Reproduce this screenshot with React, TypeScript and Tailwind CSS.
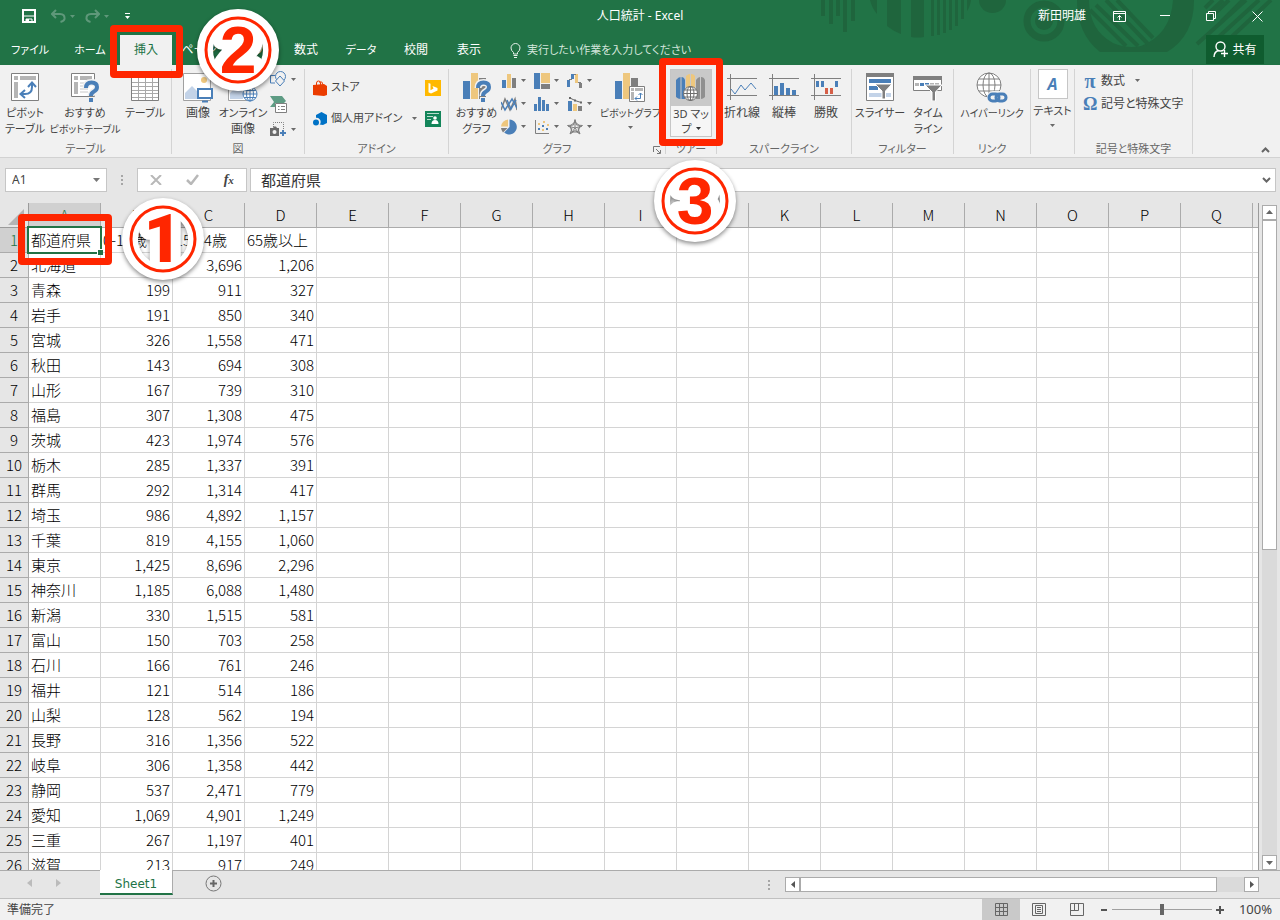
import { useState } from 'react'
import type { ReactNode } from 'react'

const columns = 'ABCDEFGHIJKLMNOPQ'.split('')

const rows: string[][] = [
  ['都道府県', '0-14歳', '15-64歳', '65歳以上'],
  ['北海道', '651', '3,696', '1,206'],
  ['青森', '199', '911', '327'],
  ['岩手', '191', '850', '340'],
  ['宮城', '326', '1,558', '471'],
  ['秋田', '143', '694', '308'],
  ['山形', '167', '739', '310'],
  ['福島', '307', '1,308', '475'],
  ['茨城', '423', '1,974', '576'],
  ['栃木', '285', '1,337', '391'],
  ['群馬', '292', '1,314', '417'],
  ['埼玉', '986', '4,892', '1,157'],
  ['千葉', '819', '4,155', '1,060'],
  ['東京', '1,425', '8,696', '2,296'],
  ['神奈川', '1,185', '6,088', '1,480'],
  ['新潟', '330', '1,515', '581'],
  ['富山', '150', '703', '258'],
  ['石川', '166', '761', '246'],
  ['福井', '121', '514', '186'],
  ['山梨', '128', '562', '194'],
  ['長野', '316', '1,356', '522'],
  ['岐阜', '306', '1,358', '442'],
  ['静岡', '537', '2,471', '779'],
  ['愛知', '1,069', '4,901', '1,249'],
  ['三重', '267', '1,197', '401'],
  ['滋賀', '213', '917', '249'],
]

const BLUE = '#4a7fb8'
const TAN = '#eec77e'
const GRAY = '#7f7f7f'
const PALE = '#c3d3e8'

function Svg({ w, h, children }: { w: number; h: number; children: ReactNode }) {
  return (
    <svg width={w} height={h} viewBox={`0 0 ${w} ${h}`} fill="none" className="shrink-0" aria-hidden="true">
      {children}
    </svg>
  )
}

function Caret({ color = '#6a6a6a' }: { color?: string }) {
  return <Svg w={5} h={3}><path d="M0 0h5L2.5 3z" fill={color} /></Svg>
}

/* ---------- title bar ---------- */

function TitlePattern() {
  return (
    <svg width="470" height="65" viewBox="0 0 470 65" fill="none" className="absolute top-0 right-0" aria-hidden="true">
      <g fill="#1f653d">
        <path d="M11 0h4v16h-4zM19 0h4v24h-4zM26 0h4v16h-4zM33 0h4v32h-4zM41 0h4v21h-4z" />
        <path d="M60 0h7v14q-5-6-7-14z" />
        <path d="M77 0h14v34q-8-3-14-8z" />
        <path d="M101 0h13v37q-7 1-13 0z" />
        <path d="M121 0h3v36h-3zM127 0h3v35h-3zM133 0h3v33h-3zM139 0h3v30h-3zM145 0h3v26h-3zM151 0h3v19h-3zM157 0h4q-1 7-4 11z" />
        <path d="M169 0h27a13.500 13 0 0 1-27 0z" />
        <circle cx="234" cy="21" r="9" />
        <path d="M267 0h12q0 30 24 43q14 6 28 3q30-12 32-46h21q0 36-27 52h-67q-23-18-23-52z" />
      </g>
      <circle cx="234" cy="21" r="17" stroke="#1f653d" strokeWidth="7" />
      <g stroke="#1f653d" strokeWidth="4">
        <path d="M280 10l36 36M286 5l42 41M296 0l42 44M307 0l36 38" />
        <path d="M395 8l8-8M399 13l14-13M398 20l21-20M411 22l22-22M387 44l49-44M401 44l48-44M414 44l47-44" />
      </g>
    </svg>
  )
}

function TitleBar() {
  return (
    <div className="relative grid h-8 grid-cols-[1fr_auto_1fr] items-center text-white">
      <div className="flex items-center pl-[22px]">
        <button aria-label="上書き保存">
          <Svg w={14} h={14}>
            <path d="M1 1h12v12H1z" stroke="#fff" strokeWidth="2" />
            <path d="M2 7h10M4 10h6v4H4z" stroke="#fff" strokeWidth="1" />
            <path d="M4 10h3v3H4z" fill="#fff" />
          </Svg>
        </button>
        <button aria-label="元に戻す" className="ml-[15px] flex items-center gap-1">
          <Svg w={15} h={14}><path d="M5 1L1 5l4 4M1.500 5H9q5 0 4.500 5-.5 2-4 3" stroke="#5f987a" strokeWidth="2" /></Svg>
          <Caret color="#5f987a" />
        </button>
        <button aria-label="やり直し" className="ml-2.5 flex items-center gap-1">
          <Svg w={15} h={14}><path d="M10 1l4 4-4 4M13.500 5H6Q1 5 1.500 10q.5 2 4 3" stroke="#5f987a" strokeWidth="2" /></Svg>
          <Caret color="#5f987a" />
        </button>
        <button aria-label="クイック アクセス ツール バー" className="ml-4">
          <Svg w={5} h={6}><path d="M0 0h5v1H0zM0 3h5L2.500 6z" fill="#fff" /></Svg>
        </button>
      </div>
      <h1 className="text-xs">人口統計 - Excel</h1>
      <div className="flex items-center justify-end">
        <span className="mr-2.5 text-xs">新田明雄</span>
        <button aria-label="リボンの表示オプション" className="flex h-8 w-[46px] items-center justify-center">
          <Svg w={13} h={11}><path d="M.5.500h12v10H.500zM.5 2.500h12M6.500 9V4.500M4.500 6.500l2-2 2 2" stroke="#fff" /></Svg>
        </button>
        <button aria-label="最小化" className="flex h-8 w-[46px] items-center justify-center">
          <Svg w={10} h={2}><path d="M0 .5h10" stroke="#fff" /></Svg>
        </button>
        <button aria-label="元のサイズに戻す" className="flex h-8 w-[46px] items-center justify-center">
          <Svg w={10} h={10}><path d="M.5 2.500h7v7h-7zM2.500 2.500v-2h7v7h-2" stroke="#fff" /></Svg>
        </button>
        <button aria-label="閉じる" className="flex h-8 w-[46px] items-center justify-center">
          <Svg w={11} h={11}><path d="M.5.500l10 10M10.500.500l-10 10" stroke="#fff" /></Svg>
        </button>
      </div>
    </div>
  )
}

function Tab({ label, className, active }: { label: string; className: string; active?: boolean }) {
  return (
    <button
      role="tab"
      aria-selected={!!active}
      className={`h-[30px] shrink-0 whitespace-nowrap ${active ? 'bg-[#f1f1f1] text-[#217346]' : 'text-white'} ${className}`}
    >
      {label}
    </button>
  )
}

function TabStrip() {
  return (
    <div className="relative flex h-[33px] items-end">
      <div role="tablist" className="flex">
        <Tab label="ファイル" className="w-[60px] text-[11px]" />
        <Tab label="ホーム" className="w-[60px] text-[11px]" />
        <Tab label="挿入" className="w-[52px] text-xs" active />
        <Tab label="ページ レイアウト" className="w-[110px] text-xs" />
        <Tab label="数式" className="w-12 text-xs" />
        <Tab label="データ" className="w-[62px] text-[11px]" />
        <Tab label="校閲" className="w-12 text-xs" />
        <Tab label="表示" className="w-[58px] text-xs" />
      </div>
      <button className="ml-3 flex h-[30px] items-center gap-1.5 text-[11px] whitespace-nowrap text-[#d3e5db]">
        <Svg w={11} h={15}><path d="M3.500 11V9.500Q1 7.500 1 5a4.500 4.500 0 0 1 9 0q0 2.500-2.500 4.500V11zM3.500 12.500h4M4 14.500h3" stroke="#e6f1eb" /></Svg>
        実行したい作業を入力してください
      </button>
      <button className="mr-4 mb-px ml-auto flex h-[29px] w-[58px] items-center justify-center gap-1 bg-[#0f5c2f] text-xs text-white">
        <Svg w={15} h={17}>
          <circle cx="7.500" cy="5.500" r="4.500" stroke="#fff" strokeWidth="1.400" />
          <path d="M1 16q0-5 4.500-6.500M11.500 9v7M8 12.500h7" stroke="#fff" strokeWidth="1.400" />
        </Svg>
        共有
      </button>
    </div>
  )
}

/* ---------- ribbon icons ---------- */

const PivotArrow = () => (
  <>
    <path d="M11 22h3q7 0 7-7v-3" stroke={BLUE} strokeWidth="2" />
    <path d="M14 18l-4.500 4L14 26M17 15l4-4.500 4 4.500" stroke={BLUE} strokeWidth="2" />
  </>
)

const Question = () => (
  <>
    <path d="M16 17q0-5.500 5.500-5.500t5.500 4.500q0 3-3 4.500t-3 4.500" stroke="#f1f1f1" strokeWidth="7" />
    <path d="M16 17q0-5.500 5.500-5.500t5.500 4.500q0 3-3 4.500t-3 4.500" stroke={BLUE} strokeWidth="4" />
    <path d="M18 26h6v6h-6z" fill="#f1f1f1" />
    <path d="M19 27h4v4h-4z" fill={BLUE} />
  </>
)

const Globe = ({ x, y, r, color }: { x: number; y: number; r: number; color: string }) => (
  <g stroke={color}>
    <circle cx={x} cy={y} r={r} fill="#fff" />
    <ellipse cx={x} cy={y} rx={r / 2} ry={r} />
    <path d={`M${x - r} ${y}h${r * 2}M${x} ${y - r}v${r * 2}M${x - r * 0.85} ${y - r / 2}h${r * 1.7}M${x - r * 0.85} ${y + r / 2}h${r * 1.7}`} />
  </g>
)

const PivotTableIcon = () => (
  <Svg w={28} h={30}>
    <path d="M.5 1.500h27v27H.500z" fill="#fff" stroke={GRAY} />
    <path d="M3 4h4v4H3zM9 4h16v4H9zM3 10h4v16H3z" fill="#b5b5b5" />
    <PivotArrow />
  </Svg>
)

const SuggestPivotIcon = () => (
  <Svg w={30} h={32}>
    <path d="M1.500 2.500h23v23h-23z" fill="#fff" stroke={GRAY} />
    <path d="M4 5h4v4H4zM10 5h12v4H10zM4 11h4v12H4z" fill="#b5b5b5" />
    <path d="M10 12h8M10 15h6M10 18h8M10 21h8" stroke="#c8c8c8" />
    <Question />
  </Svg>
)

const TableIcon = () => (
  <Svg w={28} h={30}>
    <path d="M.5 1.500h27v27H.500z" fill="#fff" stroke={GRAY} />
    <path d="M0 1h28v5H0z" fill={GRAY} />
    <path d="M7.500 2v26M14.500 2v26M21.500 2v26M1 10.500h26M1 14.500h26M1 18.500h26M1 21.500h26M1 25.500h26" stroke="#a9a9a9" />
  </Svg>
)

const PictureIcon = () => (
  <Svg w={30} h={32}>
    <path d="M.5 2.500h27v27H.500z" fill="#fff" stroke="#a0a0a0" />
    <circle cx="21" cy="9" r="3" fill={TAN} />
    <path d="M2 28v-6l7-7 6 6v7z" fill={PALE} />
    <path d="M15 18h14v9H15zM19 30.500h6" fill="#fff" stroke={BLUE} strokeWidth="2" />
  </Svg>
)

const OnlinePictureIcon = () => (
  <Svg w={30} h={30}>
    <path d="M.5 1.500h24v27H.500z" fill="#fff" stroke="#a0a0a0" />
    <path d="M2 27v-6l7-7 6 6v7z" fill={PALE} />
    <Globe x={22} y={22} r={7} color={BLUE} />
  </Svg>
)

const ShapesIcon = () => (
  <Svg w={17} h={16}>
    <path d="M5 12H.500V4.500H5" stroke={BLUE} />
    <circle cx="10.500" cy="5.500" r="5" stroke={BLUE} />
    <path d="M10 5l4.500 5-4.500 5-4.500-5z" fill="#f1f1f1" stroke={BLUE} />
  </Svg>
)

const SmartArtIcon = () => (
  <Svg w={17} h={17}>
    <path d="M0 0h12l4 5-2 2H5v4H0l4-5z" fill="#5e9c84" />
    <path d="M5.500 7.500h11v9h-11z" fill="#fff" stroke={GRAY} />
    <path d="M8 10.500h1.500M8 13.500h1.500M11 10.500h4M11 13.500h4" stroke={GRAY} />
  </Svg>
)

const ScreenshotIcon = () => (
  <Svg w={17} h={15}>
    <path d="M3.500 5V.500h10V9" stroke={GRAY} strokeDasharray="1 1" />
    <path d="M0 6h3l1-1.500h2L7 6h2v8H0z" fill="#6a6a6a" />
    <circle cx="4.500" cy="10" r="2" fill="#f1f1f1" />
    <path d="M13 8v6M10 11h6" stroke={BLUE} strokeWidth="2" />
  </Svg>
)

const StoreIcon = () => (
  <Svg w={14} h={16}>
    <path d="M0 5l11-1 3 2v9l-3 1-11-1z" fill="#eb3c00" />
    <path d="M3.500 6V3q0-2 2-2t2 2v2M6.500 2.500q3-2 3 2" stroke="#eb3c00" />
  </Svg>
)

const MyAddinsIcon = () => (
  <Svg w={14} h={14}>
    <path d="M3 3l5.500-3L14 3v8l-4 2-7-1z" fill="#0072c6" />
    <circle cx="3.500" cy="10" r="4.200" fill="#f1f1f1" />
    <circle cx="3" cy="10.500" r="3" fill="#0072c6" />
  </Svg>
)

const BingIcon = () => (
  <Svg w={16} h={16}>
    <path d="M0 0h16v16H0z" fill="#ffb900" />
    <path d="M3.500 3l2 .7v6.500L8.500 8.500 7.500 6l5 2v2.500L6 13.500l-2.500-1.300z" fill="#fff" />
  </Svg>
)

const PeopleGraphIcon = () => (
  <Svg w={16} h={16}>
    <path d="M0 0h16v16H0z" fill="#13855a" />
    <path d="M2 2.500h12M2 5.500h6M2 8.500h4" stroke="#b8dccd" />
    <circle cx="10" cy="7" r="1.800" fill="#fff" />
    <path d="M6.500 13q0-4 3.500-4t3.500 4z" fill="#fff" />
  </Svg>
)

const SuggestChartIcon = () => (
  <Svg w={30} h={32}>
    <path d="M1 10h7v18H1z" fill={BLUE} />
    <path d="M9 2h7v26H9z" fill={TAN} />
    <path d="M17 7h7v21h-7z" fill={GRAY} />
    <Question />
  </Svg>
)

const PivotChartIcon = () => (
  <Svg w={30} h={32}>
    <path d="M0 10h7v18H0z" fill={BLUE} />
    <path d="M8 2h7v26H8z" fill={TAN} />
    <path d="M16 7h7v8h-7z" fill={GRAY} />
    <path d="M14.500 15.500h15v15h-15z" fill="#fff" stroke={GRAY} />
    <path d="M16 17h3v3h-3zM20 17h8v3h-8zM16 21h3v8h-3z" fill="#b5b5b5" />
    <path d="M20 27.500h5.500V22M22 25.500l-2 2 2 2M23.500 24l2-2 2 2" stroke={BLUE} />
  </Svg>
)

const chartIcons: { name: string; icon: ReactNode }[] = [
  {
    name: '縦棒',
    icon: <Svg w={16} h={16}><path d="M1 7h4v8H1z" fill={BLUE} /><path d="M6 1h4v14H6z" fill={TAN} /><path d="M11 5h4v10h-4z" fill={GRAY} /></Svg>,
  },
  {
    name: '階層構造',
    icon: <Svg w={16} h={16}><path d="M0 0h6v16H0z" fill={BLUE} /><path d="M7 0h9v10H7z" fill={TAN} /><path d="M7 11h9v5H7z" fill={GRAY} /></Svg>,
  },
  {
    name: 'ウォーターフォール',
    icon: (
      <Svg w={16} h={16}>
        <path d="M0 7h3v7H0zM4 1h3v5H4z" fill={BLUE} /><path d="M8 1h3v9H8z" fill={TAN} /><path d="M12 10h3v5h-3z" fill={GRAY} />
        <path d="M2 6.500h3M7 1.500h2M11 9.500h3" stroke={GRAY} />
      </Svg>
    ),
  },
  {
    name: '折れ線',
    icon: (
      <Svg w={16} h={16}>
        <path d="M0 14L4 3l5 11 5-11 2 11" stroke={GRAY} strokeWidth="1.500" />
        <path d="M0 6l4 8 7-11 5 9M6 4l4 9 5-9" stroke={BLUE} strokeWidth="1.500" />
      </Svg>
    ),
  },
  {
    name: '統計',
    icon: <Svg w={16} h={16}><path d="M0 8h3v7H0zM4 1h3v14H4zM8 4h3v11H8zM12 8h3v7h-3z" fill={BLUE} /></Svg>,
  },
  {
    name: '複合',
    icon: (
      <Svg w={16} h={16}>
        <path d="M1 5h4v10H1z" fill={BLUE} /><path d="M6 8h4v7H6z" fill={TAN} /><path d="M11 10h4v5h-4z" fill={GRAY} />
        <path d="M3 2l5 2.500 6 2" stroke="#666" /><path d="M2 1h2v2H2zM7 3.500h2v2H7zM13 5.500h2v2h-2z" fill="#666" />
      </Svg>
    ),
  },
  {
    name: '円',
    icon: (
      <Svg w={16} h={16}>
        <path d="M8.500 0.500a7.500 7.500 0 1 1-5.300 13L8.500 8z" fill={BLUE} />
        <path d="M7 7.500H0A7.500 7.500 0 0 1 7 .5z" fill={TAN} /><path d="M0 9h6.500l-4.500 4.500Q.3 11.500 0 9z" fill={GRAY} />
      </Svg>
    ),
  },
  {
    name: '散布図',
    icon: (
      <Svg w={16} h={16}>
        <path d="M1.500 1v13.500H15" stroke={GRAY} />
        <path d="M4 9h2v2H4zM8 6h2v2H8zM12 9h2v2h-2z" fill={BLUE} /><path d="M4 4h2v2H4zM9 2h2v2H9zM8 10h2v2H8zM13 5h2v2h-2z" fill={TAN} />
      </Svg>
    ),
  },
  {
    name: 'レーダー',
    icon: (
      <Svg w={16} h={16}>
        <path d="M8 .5l1.500 5.500 6 .5-4.500 3 2 5.500-5-3.500-5 3.500 2-5.500-4.500-3 6-.5z" stroke={GRAY} />
        <path d="M8 3l5 4-2 6H5L3 7zM8 1v8M15 7L8 9M12 14.500L8 9M4 14.500L8 9M1 7l7 2" stroke={GRAY} />
      </Svg>
    ),
  },
]

const Map3DIcon = () => (
  <Svg w={30} h={30}>
    <path d="M0 7q2.500-3 4.500-3v22q-2.500 0-4.500-2zM5.500 4Q8 4 9 7v19H5.500z" fill={BLUE} />
    <path d="M10 3q2-2 4-2v14h-4zM15 1q3 0 4 2v12h-4z" fill={TAN} />
    <path d="M20 7q2-3 4-3v22h-4zM25 4q3 0 4 3v17q-2 2-4 2z" fill="#909090" />
    <Globe x={14.5} y={20.5} r={7} color="#6e6e6e" />
  </Svg>
)

const SparkFrame = ({ children }: { children: ReactNode }) => (
  <Svg w={30} h={28}>
    <path d="M0 5.500h30M0 22.500h30M3.500 1v26" stroke={GRAY} />
    {children}
  </Svg>
)

const SlicerIcon = () => (
  <Svg w={28} h={30}>
    <path d="M.5 1.500h27v27H.500z" fill="#fff" stroke={GRAY} />
    <path d="M0 1h28v4H0z" fill={GRAY} />
    <path d="M3 7h22v4H3zM3 14h9v4H3z" fill={BLUE} />
    <path d="M3 21h22v4H3z" fill={PALE} />
    <path d="M9 12h17l-6.500 7v8h-3.500v-8z" fill={GRAY} stroke="#fff" />
  </Svg>
)

const TimelineIcon = () => (
  <Svg w={30} h={28}>
    <path d="M.5 3.500h28v14H.500z" fill="#fff" stroke={GRAY} />
    <path d="M0 3h29v4H0z" fill={GRAY} />
    <path d="M2 10h4v3H2zM17 10h4v3h-4zM22 10h4v3h-4z" fill="#b5b5b5" />
    <path d="M7 10h4v3H7zM12 10h4v3h-4z" fill={BLUE} />
    <path d="M12 12h17l-6.500 7v9h-3.500v-9z" fill={GRAY} stroke="#fff" />
  </Svg>
)

const LinkIcon = () => (
  <Svg w={32} h={32}>
    <Globe x={13} y={14} r={12} color={GRAY} />
    <rect x="11" y="20" width="22" height="13" rx="6" fill="#f1f1f1" />
    <rect x="13" y="23" width="10" height="7" rx="3.500" stroke={BLUE} strokeWidth="3" />
    <rect x="20" y="23" width="10" height="7" rx="3.500" stroke={BLUE} strokeWidth="3" />
  </Svg>
)

/* ---------- ribbon ---------- */

interface GroupProps {
  label: string
  className: string
  bodyClassName?: string
  launcher?: boolean
  children: ReactNode
}

function Group({ label, className, bodyClassName = '', launcher, children }: GroupProps) {
  return (
    <section aria-label={label} className={`relative flex h-[85px] shrink-0 flex-col border-r border-[#d4d4d4] ${className}`}>
      <div className={`flex h-[70px] ${bodyClassName}`}>{children}</div>
      <p className="mt-auto text-center text-[11px] leading-[10px] whitespace-nowrap text-[#666]">{label}</p>
      {launcher && (
        <button aria-label="グラフの設定" className="absolute right-1 bottom-0">
          <Svg w={8} h={8}><path d="M.5 6V.500H7M3 3l4 4M7.500 4v3.500H4" stroke="#777" /></Svg>
        </button>
      )}
    </section>
  )
}

// long katakana captions go one size down so they stay inside the button
function lineSize(line: string) {
  if (line.length > 6) return 'text-[10px]'
  return /[一-龠]/.test(line) ? 'text-xs leading-4' : ''
}

function BigButton({ icon, lines, className, caret }: { icon: ReactNode; lines: string[]; className: string; caret?: boolean }) {
  return (
    <button className={`flex shrink-0 flex-col items-center text-[11px] leading-4 whitespace-nowrap text-[#444] ${className}`}>
      <span className="flex h-9 items-center justify-center">{icon}</span>
      {lines.map(line => <span key={line} className={`leading-4 ${lineSize(line)}`}>{line}</span>)}
      {caret && <span className="flex h-3 items-center"><Caret /></span>}
    </button>
  )
}

function Ribbon() {
  return (
    <div className="flex h-[94px] items-start overflow-hidden border-b border-[#d2d2d2] bg-[#f1f1f1] pt-1">
      <Group label="テーブル" className="w-[172px]" bodyClassName="pl-px">
        <BigButton icon={<PivotTableIcon />} lines={['ピボット', 'テーブル']} className="w-12" />
        <BigButton icon={<SuggestPivotIcon />} lines={['おすすめ', 'ピボットテーブル']} className="w-[72px]" />
        <BigButton icon={<TableIcon />} lines={['テーブル']} className="w-12" />
      </Group>
      <Group label="図" className="w-[133px]" bodyClassName="pl-2">
        <BigButton icon={<PictureIcon />} lines={['画像']} className="w-9" />
        <BigButton icon={<OnlinePictureIcon />} lines={['オンライン', '画像']} className="w-[54px]" />
        <div className="flex flex-col justify-between py-0.5">
          <button aria-label="図形" className="flex items-center gap-1"><ShapesIcon /><Caret /></button>
          <button aria-label="SmartArt"><SmartArtIcon /></button>
          <button aria-label="スクリーンショット" className="flex items-center gap-1"><ScreenshotIcon /><Caret /></button>
        </div>
      </Group>
      <Group label="アドイン" className="w-36" bodyClassName="justify-between pt-[3px] pr-[7px] pl-2 text-[11px] text-[#444]">
        <div>
          <button className="flex h-[31px] items-center gap-1"><StoreIcon />ストア</button>
          <button className="flex h-[31px] items-center gap-1 whitespace-nowrap">
            <MyAddinsIcon />個人用アドイン<span className="ml-1.5"><Caret /></span>
          </button>
        </div>
        <div>
          <button aria-label="Bing Maps" className="flex h-[31px] items-center"><BingIcon /></button>
          <button aria-label="People Graph" className="flex h-[31px] items-center"><PeopleGraphIcon /></button>
        </div>
      </Group>
      <Group label="グラフ" className="w-[217px]" bodyClassName="pl-[3px]" launcher>
        <BigButton icon={<SuggestChartIcon />} lines={['おすすめ', 'グラフ']} className="w-[49px]" />
        <div className="grid shrink-0 grid-cols-3 content-start">
          {chartIcons.map(c => (
            <button key={c.name} aria-label={c.name} className="flex h-[23px] w-[33px] items-center gap-1">
              {c.icon}<Caret />
            </button>
          ))}
        </div>
        <BigButton icon={<PivotChartIcon />} lines={['ピボットグラフ']} className="w-[60px]" caret />
      </Group>
      <Group label="ツアー" className="w-[51px]" bodyClassName="pl-1">
        <button className="flex h-[68px] w-[42px] flex-col items-center border border-[#c6c6c6] bg-[#f6f6f6] text-[11px] leading-[15px] text-[#444]">
          <span className="flex h-9 w-full shrink-0 items-center justify-center bg-[#c9c9c9]"><Map3DIcon /></span>
          <span className="whitespace-nowrap">3D マッ</span>
          <span className="flex items-center gap-1">プ<Caret color="#333" /></span>
        </button>
      </Group>
      <Group label="スパークライン" className="w-[135px]" bodyClassName="pl-1">
        <BigButton icon={<SparkFrame><path d="M4 16l4 5 6-9 4 5 6-7 5 6" stroke={BLUE} /></SparkFrame>} lines={['折れ線']} className="w-[42px]" />
        <BigButton icon={<SparkFrame><path d="M5 13h4v9H5zM11 10h4v12h-4zM17 15h4v7h-4zM23 17h4v5h-4z" fill={BLUE} /></SparkFrame>} lines={['縦棒']} className="w-[42px]" />
        <BigButton
          icon={<SparkFrame><path d="M5 8h3v6H5zM10 8h3v6h-3zM24 8h3v6h-3z" fill={BLUE} /><path d="M14 15h3v6h-3zM19 15h3v6h-3z" fill="#d65f48" /></SparkFrame>}
          lines={['勝敗']}
          className="w-[42px]"
        />
      </Group>
      <Group label="フィルター" className="w-[102px]" bodyClassName="pl-1">
        <BigButton icon={<SlicerIcon />} lines={['スライサー']} className="w-12" />
        <BigButton icon={<TimelineIcon />} lines={['タイム', 'ライン']} className="w-12" />
      </Group>
      <Group label="リンク" className="w-[77px]">
        <BigButton icon={<LinkIcon />} lines={['ハイパーリンク']} className="w-full" />
      </Group>
      <Group label="" className="w-11">
        <button className="flex w-full flex-col items-center text-[11px] leading-4 text-[#444]">
          <span className="mb-1 flex size-[30px] items-center justify-center border border-[#c6c6c6] bg-white font-['Open_Sans'] text-base font-bold text-[#4a7fb8] italic">A</span>
          テキスト
          <span className="flex h-3 items-center"><Caret /></span>
        </button>
      </Group>
      <Group label="記号と特殊文字" className="w-[118px]" bodyClassName="pl-2">
        <div className="flex flex-col items-start text-xs text-[#444]">
          <button className="flex h-[23px] items-center gap-1">
            <span className="w-3.5 font-['Liberation_Serif'] text-xl leading-none font-bold text-[#4a7fb8]">π</span>数式
            <span className="ml-1.5"><Caret /></span>
          </button>
          <button className="flex h-[23px] items-center gap-1 whitespace-nowrap">
            <span className="w-3.5 font-['Liberation_Serif'] text-lg leading-none font-bold text-[#4a7fb8]">Ω</span>記号と特殊文字
          </button>
        </div>
      </Group>
      <button aria-label="リボンを折りたたむ" className="mt-auto mr-2.5 mb-1 ml-auto">
        <Svg w={9} h={6}><path d="M1 5l3.500-3.500L8 5" stroke="#666" strokeWidth="2" /></Svg>
      </button>
    </div>
  )
}

/* ---------- formula bar ---------- */

function FormulaBar() {
  const [value, setValue] = useState('都道府県')
  return (
    <div className="flex h-11 shrink-0 items-start pt-2.5 pr-1 pl-[5px] text-[#444]">
      <div className="flex h-6 w-[102px] items-center border border-[#c6c6c6] bg-white pr-1.5">
        <input aria-label="名前ボックス" defaultValue="A1" className="w-0 grow pl-1.5 text-xs outline-none" />
        <Svg w={7} h={4}><path d="M0 0h7L3.500 4z" fill="#777" /></Svg>
      </div>
      <div className="flex h-6 w-[30px] items-center justify-center">
        <Svg w={2} h={10}><path d="M0 0h2v2H0zM0 4h2v2H0zM0 8h2v2H0z" fill="#a6a6a6" /></Svg>
      </div>
      <div className="flex h-6 w-[110px] items-center justify-around border border-[#c6c6c6] bg-white">
        <button aria-label="キャンセル"><Svg w={12} h={10}><path d="M1 0l10 10M11 0L1 10" stroke="#b8b8b8" strokeWidth="2" /></Svg></button>
        <button aria-label="入力"><Svg w={13} h={11}><path d="M1 6l4 4 7-9" stroke="#b8b8b8" strokeWidth="2.500" /></Svg></button>
        <button aria-label="関数の挿入" className="font-['Liberation_Serif'] text-sm leading-none font-bold italic">f<span className="text-[11px]">x</span></button>
      </div>
      <div className="ml-[3px] flex h-6 grow items-center border border-[#c6c6c6] bg-white pr-1">
        <input aria-label="数式バー" value={value} onChange={e => setValue(e.target.value)} className="w-0 grow pl-2.5 text-[15px] leading-5 text-[#333] outline-none" />
        <Svg w={9} h={6}><path d="M1 1l3.500 3.500L8 1" stroke="#666" strokeWidth="2" /></Svg>
      </div>
    </div>
  )
}

/* ---------- sheet ---------- */

function Sheet() {
  return (
    <div className="h-full grow overflow-hidden border-r border-[#9b9b9b]">
      <table className="w-full table-fixed border-separate border-spacing-0 bg-white text-[15px] leading-6 text-black">
        <colgroup>
          <col className="w-[29px]" />
          {columns.map(c => <col key={c} className="w-[72px]" />)}
          <col />
        </colgroup>
        <thead>
          <tr className="h-[25px] bg-[#e6e6e6]">
            <th className="border-r border-b border-[#9b9b9b] p-0">
              <span className="flex justify-end pt-1 pr-1"><Svg w={16} h={16}><path d="M16 0v16H0z" fill="#b4b4b4" /></Svg></span>
            </th>
            {columns.map(c => (
              <th key={c} scope="col" className={`border-r border-b border-[#ababab] p-0 font-light ${c === 'A' ? 'bg-[#d0d0d0] text-[#217346]' : ''}`}>
                {c}
              </th>
            ))}
            <td className="border-b border-[#ababab] p-0" />
          </tr>
        </thead>
        <tbody>
          {rows.map((row, r) => (
            <tr key={row[0]} className="h-[25px]">
              <th scope="row" className={`border-r border-b border-[#ababab] p-0 text-center font-light ${r === 0 ? 'bg-[#d0d0d0] text-[#217346]' : 'bg-[#e6e6e6]'}`}>
                {r + 1}
              </th>
              {columns.map((c, i) => (
                <td
                  key={c}
                  className={`relative border-r border-b border-[#d4d4d4] p-0 px-0.5 whitespace-nowrap ${r > 0 && i > 0 ? 'text-right' : ''}`}
                >
                  {row[i]}
                  {r === 0 && i === 0 && (
                    <span className="absolute -inset-0.5 z-10 border-2 border-[#217346]">
                      <span className="absolute -right-[3px] -bottom-[3px] size-1.5 border-t border-l border-white bg-[#217346] bg-clip-padding" />
                    </span>
                  )}
                </td>
              ))}
              <td className="border-b border-[#d4d4d4] p-0" />
            </tr>
          ))}
        </tbody>
      </table>
    </div>
  )
}

function VerticalScroll() {
  return (
    <div className="flex w-[21px] shrink-0 flex-col items-center pt-0.5">
      <button aria-label="上へ" className="flex h-[15px] w-[15px] shrink-0 items-center justify-center border border-[#ababab] bg-white">
        <Svg w={7} h={4}><path d="M0 4h7L3.500 0z" fill="#666" /></Svg>
      </button>
      <div className="w-[15px] grow bg-[#dadada]">
        <div className="h-[52%] border border-[#ababab] bg-white" />
      </div>
      <button aria-label="下へ" className="flex h-[15px] w-[15px] shrink-0 items-center justify-center border border-[#ababab] bg-white">
        <Svg w={7} h={4}><path d="M0 0h7L3.500 4z" fill="#666" /></Svg>
      </button>
    </div>
  )
}

function SheetTabs() {
  return (
    <div className="flex h-7 shrink-0 items-start border-t border-[#ababab]">
      <div className="flex h-6 w-[100px] items-center gap-6 pl-[27px]">
        <button aria-label="前のシート"><Svg w={5} h={8}><path d="M5 0v8L0 4z" fill="#bbb" /></Svg></button>
        <button aria-label="次のシート"><Svg w={5} h={8}><path d="M0 0v8l5-4z" fill="#bbb" /></Svg></button>
      </div>
      <button className="-mt-px h-[25px] w-[73px] border-r border-b-2 border-r-[#ababab] border-b-[#217346] bg-white pt-1 font-['DejaVu_Sans'] text-xs text-[#217346]">Sheet1</button>
      <button aria-label="新しいシート" className="mt-1 ml-8">
        <Svg w={17} h={17}><circle cx="8.500" cy="8.500" r="7.500" stroke="#777" /><path d="M8.500 5v7M5 8.500h7" stroke="#666" strokeWidth="2" /></Svg>
      </button>
      <div className="mt-1.5 mr-[21px] ml-auto flex items-center">
        <Svg w={2} h={10}><path d="M0 0h2v2H0zM0 4h2v2H0zM0 8h2v2H0z" fill="#a6a6a6" /></Svg>
        <button aria-label="左へ" className="ml-[15px] flex size-[15px] items-center justify-center border border-[#ababab] bg-white">
          <Svg w={4} h={7}><path d="M4 0v7L0 3.500z" fill="#555" /></Svg>
        </button>
        <div className="h-[15px] w-[444px] bg-[#dadada]">
          <div className="h-full w-[94%] border border-[#ababab] bg-white" />
        </div>
        <button aria-label="右へ" className="flex size-[15px] items-center justify-center border border-[#ababab] bg-white">
          <Svg w={4} h={7}><path d="M0 0v7l4-3.500z" fill="#555" /></Svg>
        </button>
      </div>
    </div>
  )
}

function StatusBar() {
  const [zoom, setZoom] = useState(100)
  return (
    <footer className="flex h-[22px] shrink-0 items-stretch border-t border-[#c0c0c0] bg-[#f1f1f1] pl-[7px] text-xs text-[#444]">
      <span className="self-center">準備完了</span>
      <button aria-label="標準" className="ml-auto flex w-[38px] items-center justify-center bg-[#c9c9c9]">
        <Svg w={13} h={13}><path d="M.5.500h12v12H.500zM4.500 0v13M8.500 0v13M0 4.500h13M0 8.500h13" stroke="#666" /></Svg>
      </button>
      <button aria-label="ページ レイアウト表示" className="flex w-[38px] items-center justify-center">
        <Svg w={14} h={13}><path d="M.5.500h13v12H.500zM3.500 2.500h7v8h-7zM5 4.500h4M5 6.500h4M5 8.500h4" stroke="#666" /></Svg>
      </button>
      <button aria-label="改ページ プレビュー" className="flex w-[38px] items-center justify-center">
        <Svg w={14} h={13}><path d="M.5.500h13v12H.500zM.5 7.500h8V0M4.500 0v7" stroke="#666" /></Svg>
      </button>
      <button aria-label="縮小" className="flex w-4 items-center justify-center" onClick={() => setZoom(zoom - 10)}>
        <Svg w={6} h={2}><path d="M0 0h6v2H0z" fill="#555" /></Svg>
      </button>
      <input
        type="range"
        aria-label="ズーム"
        min={0}
        max={200}
        value={zoom}
        onChange={e => setZoom(Number(e.target.value))}
        className="w-[100px] appearance-none self-center bg-transparent [&::-webkit-slider-runnable-track]:h-px [&::-webkit-slider-runnable-track]:bg-[#a0a0a0] [&::-webkit-slider-thumb]:-mt-[5px] [&::-webkit-slider-thumb]:h-[11px] [&::-webkit-slider-thumb]:w-1 [&::-webkit-slider-thumb]:appearance-none [&::-webkit-slider-thumb]:bg-[#666]"
      />
      <button aria-label="拡大" className="flex w-4 items-center justify-center" onClick={() => setZoom(zoom + 10)}>
        <Svg w={8} h={8}><path d="M3 0h2v3h3v2H5v3H3V5H0V3h3z" fill="#555" /></Svg>
      </button>
      <span className="w-[52px] self-center pr-2 text-right font-['Noto_Sans'] text-[13px]">{zoom}%</span>
    </footer>
  )
}

/* ---------- step markers ---------- */

function StepNumber({ n, className }: { n: number; className: string }) {
  return (
    <svg width="90" height="90" viewBox="0 0 90 90" className={`pointer-events-none absolute drop-shadow-[0_2px_2px_rgba(0,0,0,0.45)] ${className}`}>
      <circle cx="45" cy="45" r="33" fill="none" stroke="#fff" strokeWidth="16" />
      <text
        x="45"
        y="68"
        textAnchor="middle"
        stroke="#fff"
        strokeWidth="20"
        strokeLinejoin="round"
        fill="#ff2600"
        className={`text-[66px] [paint-order:stroke] ${n === 1 ? 'font-[Roboto] font-black' : "font-['Liberation_Sans'] font-bold"}`}
      >
        {n}
      </text>
      <circle cx="45" cy="45" r="32" fill="none" stroke="#ff2600" strokeWidth="3" />
    </svg>
  )
}

function StepFrame({ className }: { className: string }) {
  return <div className={`pointer-events-none absolute rounded-sm border-[7px] border-[#ff2600] ${className}`} />
}

export default function App() {
  return (
    <div className="relative flex h-screen flex-col overflow-hidden bg-[#e6e6e6] font-['Noto_Sans','Noto_Sans_CJK_JP',sans-serif] [font-feature-settings:'palt']">
      <header className="relative shrink-0 bg-[#217346]">
        <TitlePattern />
        <TitleBar />
        <TabStrip />
      </header>
      <Ribbon />
      <FormulaBar />
      <main className="flex min-h-0 grow pt-px font-['Noto_Sans_CJK_JP',sans-serif] font-light [font-feature-settings:normal]">
        <Sheet />
        <VerticalScroll />
      </main>
      <SheetTabs />
      <StatusBar />

      <StepFrame className="top-[214px] left-[18px] h-[51px] w-[94px]" />
      <StepNumber n={1} className="top-[194px] left-[118px]" />
      <StepFrame className="top-[25px] left-[110px] h-[53px] w-[73px]" />
      <StepNumber n={2} className="top-[5px] left-[193px]" />
      <StepFrame className="top-[58px] left-[659px] h-[88px] w-16" />
      <StepNumber n={3} className="top-[156px] left-[650px]" />
    </div>
  )
}
